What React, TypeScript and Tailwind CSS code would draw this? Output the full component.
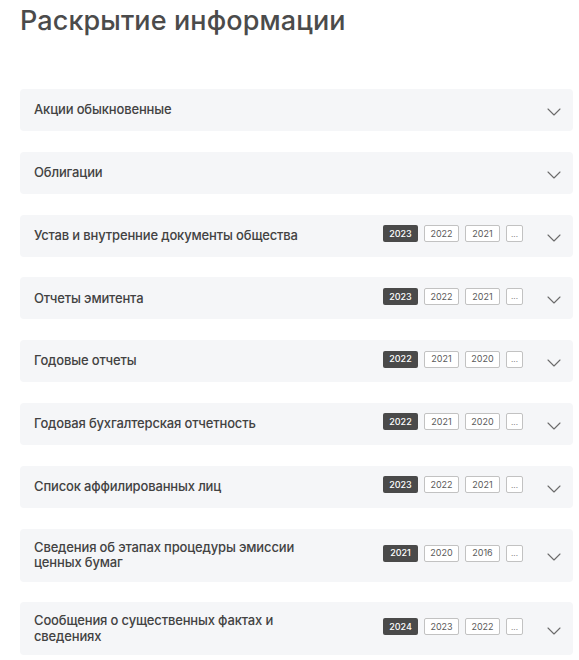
const sections = [
  { title: "Акции обыкновенные", years: [] as string[] },
  { title: "Облигации", years: [] as string[] },
  { title: "Устав и внутренние документы общества", years: ["2023", "2022", "2021"] },
  { title: "Отчеты эмитента", years: ["2023", "2022", "2021"] },
  { title: "Годовые отчеты", years: ["2022", "2021", "2020"] },
  { title: "Годовая бухгалтерская отчетность", years: ["2022", "2021", "2020"] },
  { title: "Список аффилированных лиц", years: ["2023", "2022", "2021"] },
  { title: "Сведения об этапах процедуры эмиссии ценных бумаг", years: ["2021", "2020", "2016"] },
  { title: "Сообщения о существенных фактах и сведениях", years: ["2024", "2023", "2022"] },
];

function Chevron() {
  return (
    <svg width="14" height="8" viewBox="0 0 14 8" fill="none" className="shrink-0 translate-y-[2px]">
      <path d="M1 1l6 6 6-6" stroke="#6b6b6b" strokeWidth="1.1" strokeLinecap="round" strokeLinejoin="round" />
    </svg>
  );
}

export default function App() {
  return (
    <div className="h-[660px] overflow-hidden bg-white pl-5 pr-[6px] pt-[3px] font-['Inter',sans-serif]">
      <h1 className="text-[27px] font-medium leading-[36px] tracking-[0.1px] text-[#4b4b4b]">
        Раскрытие информации
      </h1>

      <div className="mt-[50px] flex flex-col gap-[20.8px]">
        {sections.map((s) => (
          <div
            key={s.title}
            className="flex min-h-[42px] items-center rounded-[4px] bg-[#f5f6f8] py-[11px] pl-[14px] pr-[12px]"
          >
            <div className="w-[290px] text-[13px] font-medium leading-[15.5px] tracking-[-0.15px] text-[#424242]">
              {s.title}
            </div>
            <div className="ml-auto flex items-center">
              {s.years.length > 0 && (
                <div className="mr-[24px] flex -translate-y-[2px] items-center gap-[6px]">
                  {s.years.map((y, i) => (
                    <span
                      key={y}
                      className={
                        i === 0
                          ? "flex h-[17px] w-[35px] items-center justify-center rounded-[2px] bg-[#4a4a4a] text-[9px] font-medium text-white"
                          : "flex h-[17px] w-[35px] items-center justify-center rounded-[2px] border border-[#c2c2c2] bg-white text-[9px] text-[#5a5a5a]"
                      }
                    >
                      {y}
                    </span>
                  ))}
                  <span className="flex h-[17px] w-[17px] items-center justify-center rounded-[2px] border border-[#c2c2c2] bg-white text-[8px] leading-none text-[#777]">
                    ...
                  </span>
                </div>
              )}
              <Chevron />
            </div>
          </div>
        ))}
      </div>
    </div>
  );
}
